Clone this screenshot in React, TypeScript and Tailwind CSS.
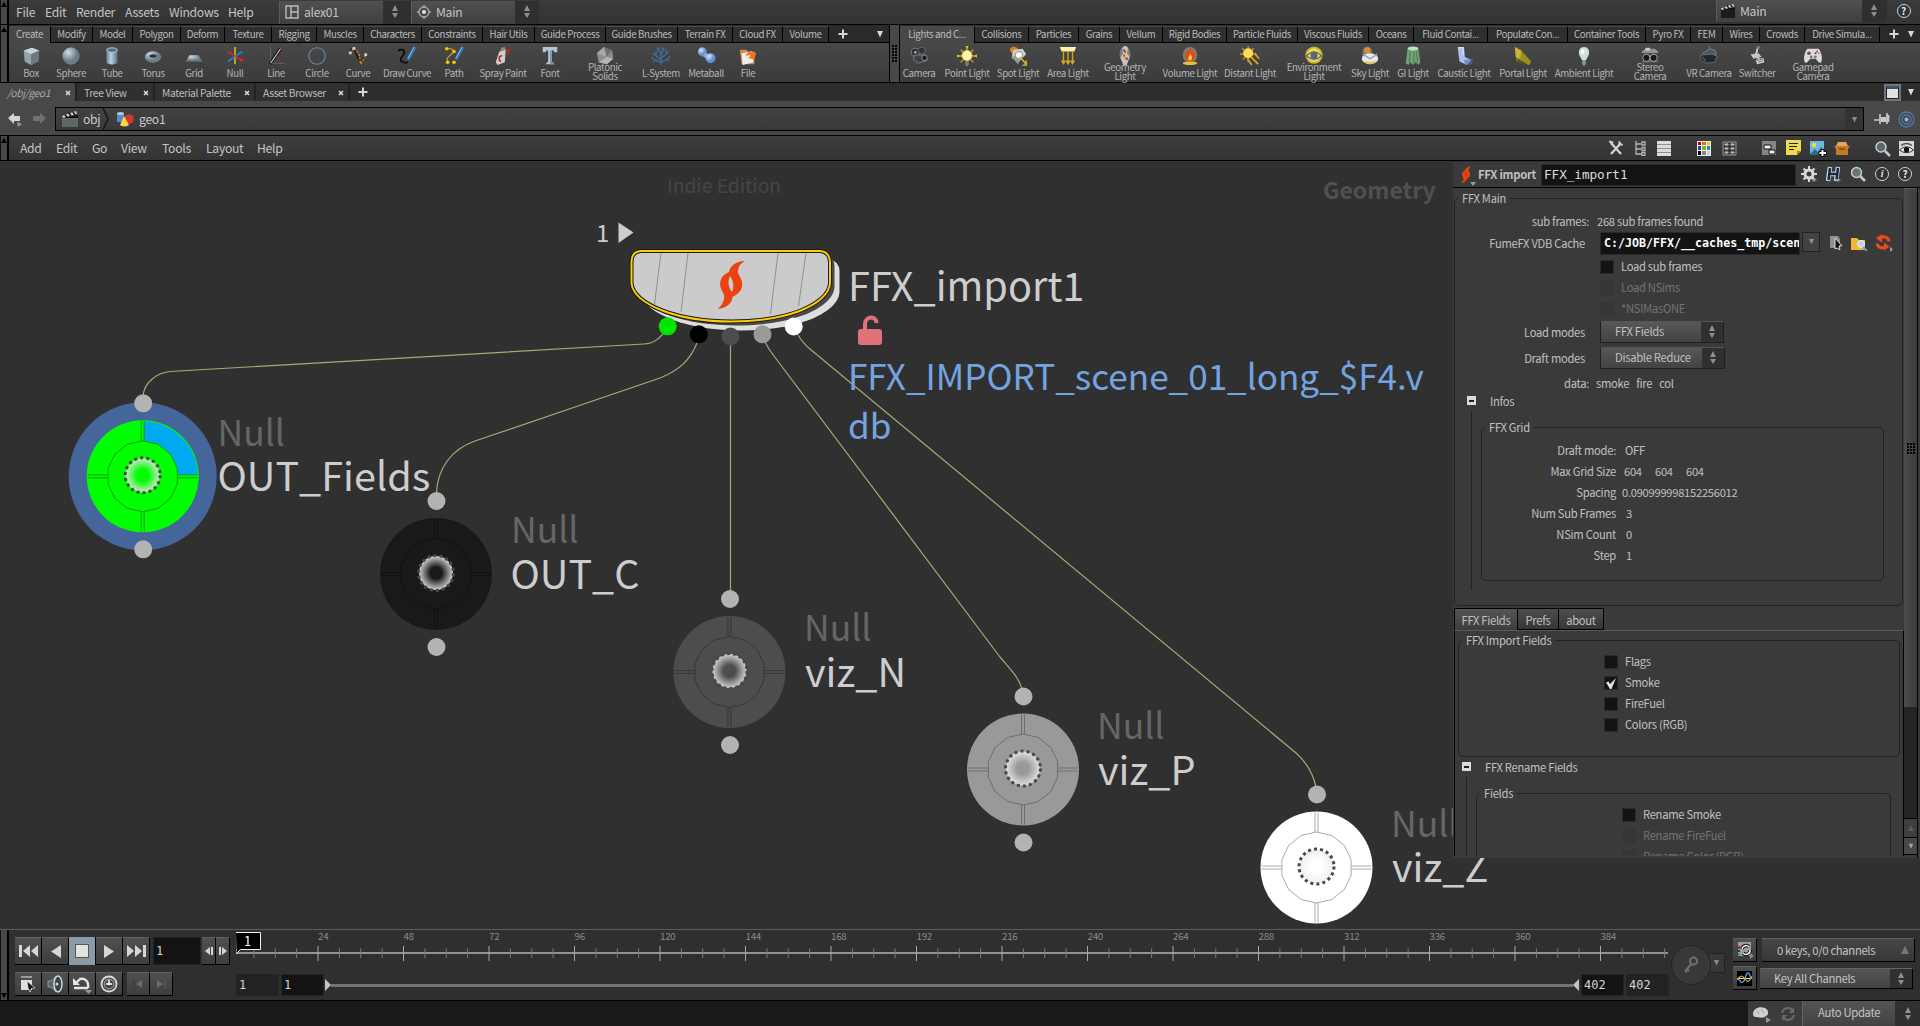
import React from "react";

type P = { children?: React.ReactNode; className?: string };

const SANS = "font-['Noto_Sans_CJK_SC','Noto_Sans',sans-serif]";
const MONO = "font-['DejaVu_Sans_Mono',monospace]";

/* ---------- small shared pieces ---------- */

function Svg({ w = 22, h = 22, vb, children, className = "" }: P & { w?: number; h?: number; vb?: string }) {
  return (
    <svg width={w} height={h} viewBox={vb ?? `0 0 ${w} ${h}`} fill="none" className={`shrink-0 ${className}`}>
      {children}
    </svg>
  );
}

function UpDown({ className = "" }: { className?: string }) {
  return (
    <Svg w={8} h={16} className={className}>
      <path d="M4 1L7 7H1zM4 14L1 9H7z" fill="#8f8f8f" />
    </Svg>
  );
}

function Down({ c = "#d8d8d8", s = 8 }: { c?: string; s?: number }) {
  return (
    <Svg w={s} h={s} vb="0 0 8 8">
      <path d="M1 1H7L4 7.500z" fill={c} />
    </Svg>
  );
}

function Plus() {
  return (
    <Svg w={10} h={10}>
      <path d="M5 0.500V9.500M0.500 5H9.500" stroke="#d6d6d6" strokeWidth="2" />
    </Svg>
  );
}

function Handle({ down }: { down?: boolean }) {
  return (
    <div className={`w-[9px] shrink-0 border-l border-r-2 border-l-[#111] border-r-black bg-[#484848] flex justify-center ${down ? "items-end pb-px" : "items-start pt-px"}`}>
      <Svg w={6} h={7}>
        <path d={down ? "M0 1H6L3 6z" : "M0 6H6L3 1z"} fill="#000" />
      </Svg>
    </div>
  );
}

function HelpDot({ t = "?" }: { t?: string }) {
  return (
    <div className={`w-[14px] h-[14px] rounded-full border border-[#d5d5d5] bg-[#2c3236] text-[#e8e8e8] text-[10px] leading-[12px] font-bold text-center ${t === "i" ? "font-['Liberation_Serif',serif] italic" : ""}`}>
      {t}
    </div>
  );
}

/* ---------- shelf icons ---------- */

const ICONS: Record<string, React.ReactNode> = {
  Box: (
    <>
      <path d="M3 5L12 2L20 5L19 17L11 21L4 17z" fill="#93a2ad" />
      <path d="M3 5L12 2L20 5L11 9z" fill="#c6d2da" />
      <path d="M11 9L20 5L19 17L11 21z" fill="#687885" />
    </>
  ),
  Sphere: <circle cx="11" cy="11" r="9.5" fill="url(#gSph)" />,
  Tube: (
    <>
      <path d="M5 4V18C5 21 17 21 17 18V4z" fill="url(#gTube)" />
      <ellipse cx="11" cy="4.500" rx="6" ry="2.500" fill="#4d7186" stroke="#c2d3dc" />
    </>
  ),
  Torus: (
    <>
      <ellipse cx="11" cy="12" rx="9" ry="6.500" fill="url(#gSph)" />
      <ellipse cx="11" cy="11" rx="4" ry="1.800" fill="#2a3036" />
    </>
  ),
  Grid: <path d="M6 10H16L20 17H2z" fill="url(#gSph)" />,
  Null: (
    <>
      <path d="M11 1V20" stroke="#b3a819" strokeWidth="2.200" />
      <path d="M3 6L19 16" stroke="#d22" strokeWidth="1.800" />
      <path d="M19 6L3 17" stroke="#3779c4" strokeWidth="1.800" />
      <path d="M17 14h3v3h-3z" fill="#e22" />
    </>
  ),
  Line: (
    <>
      <path d="M5 1V19H21" stroke="#666" />
      <path d="M4 20L16 3" stroke="#111" strokeWidth="3.500" />
      <path d="M5 19L16 3" stroke="#ddd" strokeWidth="1.200" />
      <path d="M2 20L6 14M12 8L16 19" stroke="#c22" strokeDasharray="2 1.500" />
    </>
  ),
  Circle: <circle cx="11" cy="11" r="9" stroke="#6e87ad" strokeWidth="1.200" />,
  Curve: (
    <>
      <path d="M2 7C6 -3 8 6 10 11S14 20 20 9" stroke="#111" strokeWidth="1.500" />
      <path d="M2 8L6 2L12 8L14 20L20 9" stroke="#c98a24" strokeDasharray="2.500 1.500" strokeWidth="1.500" />
      <path d="M1 6h3v3h-3zM5 1h3v3h-3zM18 8h3v3h-3z" fill="#cfcfcf" />
    </>
  ),
  "Draw Curve": (
    <>
      <path d="M1 5C8 2 10 6 6 11S4 19 12 18" stroke="#0c0c0c" strokeWidth="2" />
      <path d="M20 1L12 15" stroke="#2d6fb5" strokeWidth="3.500" />
      <path d="M19 1L12 14" stroke="#80b4e6" strokeWidth="1.200" />
    </>
  ),
  Path: (
    <>
      <path d="M3 3C14 2 10 8 6 11S4 17 5 18" stroke="#c99a1c" strokeWidth="1.400" />
      <path d="M21 1L13 15" stroke="#2d6fb5" strokeWidth="3.500" />
      <path d="M20 1L13 14" stroke="#80b4e6" strokeWidth="1.200" />
      <circle cx="3" cy="3" r="2" fill="#f2c500" />
      <circle cx="11" cy="6" r="2" fill="#f2c500" />
      <circle cx="4" cy="18" r="2" fill="#f2c500" />
      <circle cx="11" cy="18" r="2" fill="#f2c500" />
    </>
  ),
  "Spray Paint": (
    <>
      <path d="M14 3L21 4L16 11z" fill="#c4281c" opacity=".75" />
      <path d="M7 6L14 4L13 18L5 21L3 18z" fill="#cfcfcf" />
      <path d="M9 2L13 1L14 4L8 6z" fill="#8b8b8b" />
      <path d="M10 11C6 10 6 17 9 17" stroke="#c8302a" strokeWidth="2" />
    </>
  ),
  Font: (
    <>
      <path d="M3 1H19V7H16L15 5H13V17L16 20H6L9 17V5H7L6 7H3z" fill="#b4c5d3" />
      <path d="M11 5H13V17L16 20H11z" fill="#8496a5" />
    </>
  ),
  "Platonic Solids": (
    <>
      <path d="M10 1L19 5L20 14L13 20L4 18L2 8z" fill="#8d8d8d" />
      <path d="M10 1L13 12L2 8z" fill="#aaa" />
      <path d="M10 1L19 5L13 12z" fill="#6f6f6f" />
      <path d="M13 12L20 14L13 20L4 18z" fill="#b5b5b5" />
    </>
  ),
  "L-System": (
    <path
      d="M11 21V10M11 16L4 9M11 14L18 7M11 10L8 2M11 10L14 2M11 18L3 15L1 12M11 18L19 14L21 11M6 11L2 8M5 10L6 5M16 9L20 6M17 8L16 3M9 5L6 2M13 5L12 1M4 15L3 18M18 15L20 17"
      stroke="#3c6ea5"
      strokeWidth="1.400"
    />
  ),
  Metaball: (
    <>
      <circle cx="7" cy="6.500" r="5" fill="url(#gBlue)" />
      <path d="M9 9L14 13" stroke="#86aede" strokeWidth="5" />
      <circle cx="16" cy="13.500" r="5.500" fill="url(#gBlue)" />
    </>
  ),
  File: (
    <>
      <path d="M2 4H9L11 6H18V20H4z" fill="#d98d4a" />
      <path d="M4 8L15 6L17 18L5 21z" fill="#eee" />
      <path d="M9 10C10 6 14 5 16 8L20 7L18 15L11 13L14 11C12 9 10 10 9 12z" fill="#f2741f" />
    </>
  ),
  Camera: (
    <>
      <circle cx="7" cy="7" r="4.500" fill="#2c3237" stroke="#7b868e" />
      <circle cx="14" cy="5" r="3.800" fill="#2c3237" stroke="#67727a" />
      <path d="M6 10H18L20 16L10 19L5 15z" fill="#3b4248" stroke="#78838b" />
      <circle cx="17" cy="13" r="3" fill="#1b1f22" stroke="#8b969e" />
      <circle cx="7" cy="7" r="1.500" fill="#9aa5ad" />
    </>
  ),
  "Point Light": (
    <>
      <path d="M11 0V22M1 11H21M4 4L18 18M18 4L4 18" stroke="#d0a91b" strokeWidth="1.500" />
      <path d="M9 14H13V21H9z" fill="#777" />
      <circle cx="11" cy="10.500" r="5.500" fill="#fff5a8" stroke="#e5cf55" />
      <path d="M9 0H13L11 3zM0 9V13L3 11zM22 9V13L19 11z" fill="#e3bd22" />
    </>
  ),
  "Spot Light": (
    <>
      <path d="M2 5C2 0 8 0 11 3L5 9z" fill="#d98022" />
      <path d="M6 4L16 3L20 9L11 18L4 13z" fill="#cfcfca" />
      <path d="M4 12L9 10L13 16L11 20z" fill="#9a9a96" />
      <circle cx="12" cy="10" r="4" fill="#fdfdf0" stroke="#8a8a86" />
      <path d="M13 12L20 20M20 16V21H16" stroke="#e6c321" strokeWidth="1.500" />
    </>
  ),
  "Area Light": (
    <>
      <path d="M2 1H20L18 6H4z" fill="#fff3a6" />
      <path d="M6 6V19M11 6V20M16 6V19" stroke="#d0a91b" strokeWidth="1.500" />
      <path d="M3 16H9L6 21zM8 16H14L11 21zM13 16H19L16 21z" fill="#d0a91b" />
    </>
  ),
  "Geometry Light": (
    <>
      <ellipse cx="11" cy="9" rx="6" ry="9" fill="#fff" opacity=".3" />
      <path d="M11 0C15 0 15 5 13 7L16 12L13 21H9L6 13L9 8C7 5 8 0 11 0z" fill="#c9c3b5" />
      <path d="M9 4L13 8L10 11L14 15" stroke="#9a2a9a" strokeWidth="2" />
      <path d="M13 6L11 13" stroke="#e6d321" strokeWidth="2" />
    </>
  ),
  "Volume Light": (
    <>
      <ellipse cx="11" cy="10" rx="8" ry="9" fill="#d9b7a0" opacity=".45" />
      <ellipse cx="11" cy="19" rx="8" ry="2" fill="#e2c13a" />
      <path d="M11 1C13 5 17 7 16 13C15 18 7 18 6 13C5 10 8 9 8 5C10 7 11 5 11 1z" fill="#e6461a" />
      <path d="M11 8C12 11 14 11 13 14C12 17 9 16 9 14C9 12 11 11 11 8z" fill="#ffcf3a" />
    </>
  ),
  "Distant Light": (
    <>
      <path d="M9 0V18M0 9H18M2.500 2.500L15 15M15 2.500L3 15" stroke="#c99a1c" strokeWidth="1.500" />
      <circle cx="9" cy="8" r="5.500" fill="#ffdc52" />
      <path d="M12 12L20 20M16 8L21 14M8 14L13 21" stroke="#d8ae1e" strokeWidth="1.800" />
    </>
  ),
  "Environment Light": (
    <>
      <circle cx="11" cy="10" r="9.500" fill="#c9b52b" />
      <circle cx="11" cy="10" r="7.500" fill="#eadb57" />
      <path d="M3 11Q11 2 19 11Q11 18 3 11z" fill="#e4e4df" stroke="#6a6a55" strokeWidth="1.500" />
      <circle cx="11" cy="10.500" r="4" fill="#59676f" />
    </>
  ),
  "Sky Light": (
    <>
      <circle cx="8" cy="6" r="5.500" fill="#6a747b" />
      <circle cx="8" cy="5" r="3.500" fill="#e08c22" />
      <ellipse cx="11" cy="14" rx="9" ry="6" fill="#e8e8e8" />
      <path d="M3 9L11 14L19 9" stroke="#96a0b8" strokeWidth="1.500" />
      <path d="M2 16Q11 24 20 16Q11 19 2 16z" fill="#d9c45a" />
    </>
  ),
  "GI Light": (
    <>
      <ellipse cx="11" cy="3" rx="6" ry="2.500" fill="#bfe0c2" />
      <path d="M5 3L3 19L6 21L8 18L11 21L14 18L17 21L19 18L17 3C14 6 8 6 5 3z" fill="#6fa277" />
      <path d="M8 6L7 18M12 6V19M15 6L16 18" stroke="#48734f" />
    </>
  ),
  "Caustic Light": (
    <>
      <path d="M4 1H11L12 12L19 15L14 21L6 17z" fill="#a9c0ec" />
      <path d="M11 15L21 14L20 20L12 21z" fill="#5c6ca8" opacity=".6" />
      <path d="M5 2H10V10" stroke="#e7efff" />
    </>
  ),
  "Portal Light": (
    <>
      <path d="M2 1L9 5L20 17L18 21L4 17z" fill="#9a8f1d" />
      <path d="M2 1L9 5L8 14L3 12z" fill="#c4b832" />
      <path d="M5 14L16 20L13 21L5 19z" fill="#4f4d2a" />
    </>
  ),
  "Ambient Light": (
    <>
      <path d="M11 1C17 1 18 8 15 12L13 16H9L7 12C4 8 5 1 11 1z" fill="#cfdfe0" />
      <path d="M9 16H13V20L11 22L9 20z" fill="#8c9698" />
      <ellipse cx="9.500" cy="6" rx="2" ry="3" fill="#f4fafa" />
    </>
  ),
  "Stereo Camera": (
    <>
      <path d="M2 6L6 3H16L20 6V18H2z" fill="#8f9290" />
      <path d="M6 2H11V5H6z" fill="#caccc9" />
      <path d="M2 8H20V17H2z" fill="#2f3234" />
      <circle cx="7" cy="13" r="4" fill="#151718" stroke="#b6b9b7" />
      <circle cx="15" cy="13" r="4" fill="#151718" stroke="#b6b9b7" />
    </>
  ),
  "VR Camera": (
    <>
      <path d="M4 8L12 3L18 5L19 9L8 12z" fill="#50565b" stroke="#7b858c" />
      <path d="M2 10L14 9L20 11L17 18L7 19L2 15z" fill="#23282c" stroke="#5f6d78" />
      <path d="M4 12L8 18" stroke="#5a81a8" />
      <path d="M12 3L11 0" stroke="#777" />
    </>
  ),
  Switcher: (
    <>
      <path d="M12 1L10 9L14 16" stroke="#d4d4d4" strokeWidth="2" />
      <path d="M4 9L13 8L16 12L7 14z" fill="#c5c5c5" />
      <path d="M10 15L18 13L19 18L11 20z" fill="#e8e8e8" />
      <path d="M11 16L18 14M12 18L18 16" stroke="#555" />
      <circle cx="12.500" cy="1.500" r="2" fill="#777" />
    </>
  ),
  "Gamepad Camera": (
    <>
      <path d="M5 3H17C20 5 22 14 20 18C18 20 16 16 14 14H8C6 16 4 20 2 18C0 14 2 5 5 3z" fill="#dadada" />
      <circle cx="6.500" cy="8" r="2" fill="#555" />
      <circle cx="9" cy="12" r="1.600" fill="#777" />
      <circle cx="13.500" cy="12" r="1.600" fill="#777" />
      <circle cx="15.500" cy="6" r="1.100" fill="#d33" />
      <circle cx="17.500" cy="8" r="1.100" fill="#e8861b" />
      <circle cx="13.800" cy="8" r="1.100" fill="#357" />
    </>
  ),
};

/* ---------- shelves ---------- */

type Tool = [string, number];
type Tab = [string, number];

const LEFT_TABS: Tab[] = [
  ["Create", 42], ["Modify", 42], ["Model", 40], ["Polygon", 48], ["Deform", 44], ["Texture", 47], ["Rigging", 45], ["Muscles", 47],
  ["Characters", 58], ["Constraints", 61], ["Hair Utils", 52], ["Guide Process", 71], ["Guide Brushes", 72], ["Terrain FX", 55],
  ["Cloud FX", 50], ["Volume", 46],
];
const RIGHT_TABS: Tab[] = [
  ["Lights and C...", 75], ["Collisions", 54], ["Particles", 50], ["Grains", 41], ["Vellum", 43], ["Rigid Bodies", 64],
  ["Particle Fluids", 71], ["Viscous Fluids", 71], ["Oceans", 45], ["Fluid Contai...", 74], ["Populate Con...", 80],
  ["Container Tools", 78], ["Pyro FX", 45], ["FEM", 32], ["Wires", 37], ["Crowds", 45], ["Drive Simula...", 75],
];
const LEFT_TOOLS: Tool[] = [
  ["Box", 31], ["Sphere", 71], ["Tube", 112], ["Torus", 153], ["Grid", 194], ["Null", 235], ["Line", 276], ["Circle", 317],
  ["Curve", 358], ["Draw Curve", 407], ["Path", 454], ["Spray Paint", 503], ["Font", 550], ["Platonic Solids", 605],
  ["L-System", 661], ["Metaball", 706], ["File", 748],
];
const RIGHT_TOOLS: Tool[] = [
  ["Camera", 919], ["Point Light", 967], ["Spot Light", 1018], ["Area Light", 1068], ["Geometry Light", 1125],
  ["Volume Light", 1190], ["Distant Light", 1250], ["Environment Light", 1314], ["Sky Light", 1370], ["GI Light", 1413],
  ["Caustic Light", 1464], ["Portal Light", 1523], ["Ambient Light", 1584], ["Stereo Camera", 1650], ["VR Camera", 1709],
  ["Switcher", 1757], ["Gamepad Camera", 1813],
];
const TWO_LINE = new Set(["Platonic Solids", "Geometry Light", "Environment Light", "Stereo Camera", "Gamepad Camera"]);
const ITEM = 40;

function Shelf({ tabs, tools, origin, className }: { tabs: Tab[]; tools: Tool[]; origin: number; className: string }) {
  return (
    <div className={`flex flex-col bg-[#414141] tracking-[-0.38px] ${className}`}>
      <div className="flex h-[18px] bg-[#2a2a2a] pt-px">
        {tabs.map(([t, w], i) => (
          <div
            key={t}
            style={{ width: w }}
            className={`shrink-0 whitespace-nowrap border-r border-t border-t-[#4b4b4b] border-r-black text-center text-[9.700px] leading-[15px] text-[#bcbcbc] ${i === 0 ? "bg-[#484848]" : "border-b border-b-black bg-[#2f2f2f]"}`}
          >
            {t}
          </div>
        ))}
        <div className="flex grow items-center border-b border-black pl-[9px] justify-between pr-[5px]">
          <Plus />
          <Down />
        </div>
      </div>
      <div className="flex h-[39px] bg-linear-to-b from-[#484848] to-[#3b3b3b]">
        {tools.map(([t, c], i) => (
          <div
            key={t}
            style={{ width: ITEM, marginLeft: c - ITEM / 2 - (i ? tools[i - 1][1] + ITEM / 2 : origin) }}
            className="flex shrink-0 flex-col items-center pt-[3px]"
          >
            <Svg w={20} h={20} vb="0 0 22 22">{ICONS[t]}</Svg>
            {TWO_LINE.has(t) ? (
              <div className="-mt-[3px] text-center text-[9.700px] leading-[9px] text-[#b4b4b4]">
                {t.split(" ").map((l) => (
                  <div key={l} className="whitespace-nowrap">{l}</div>
                ))}
              </div>
            ) : (
              <div className="whitespace-nowrap text-[9.700px] leading-[14px] text-[#b4b4b4]">{t}</div>
            )}
          </div>
        ))}
      </div>
    </div>
  );
}

function Menu({ items }: { items: Tab[] }) {
  return (
    <>
      {items.map(([t, w]) => (
        <div key={t} style={{ width: w }} className="shrink-0 whitespace-nowrap text-[12.200px] tracking-[-0.3px] text-[#c4c4c4]">
          {t}
        </div>
      ))}
    </>
  );
}

function Clapper({ s = 18, c = "#888" }: { s?: number; c?: string }) {
  return (
    <Svg w={s} h={s} vb="0 0 18 18">
      <path d="M1 8H17V17H1z" fill={c} />
      <path d="M1 7L17 5V8H1z" fill="#111" />
      <path d="M1 6L15 1L16 4L2 8z" fill="#cfcfcf" />
      <path d="M4 5L6 7M8 3L10 6M12 2L14 5" stroke="#111" strokeWidth="1.500" />
    </Svg>
  );
}

function TopBar() {
  return (
    <div className="flex h-[24px] shrink-0 bg-linear-to-b from-[#3b3b3b] to-[#333] tracking-[-0.3px]">
      <Handle />
      <div className="flex grow items-center pl-[7px]">
        <Menu items={[["File", 29], ["Edit", 31], ["Render", 49], ["Assets", 44], ["Windows", 59], ["Help", 51]]} />
        <div className="flex h-[23px] w-[104px] items-center gap-[5px] border-l border-[#5a5a5a] bg-linear-to-b from-[#505050] to-[#404040] pl-[5px] text-[12.200px] text-[#c4c4c4]">
          <Svg w={14} h={14}>
            <path d="M1 1H13V13H1zM6 1V13M6 7H13" stroke="#bbb" strokeWidth="1.400" />
          </Svg>
          alex01
        </div>
        <div className="flex h-[23px] w-[28px] items-center bg-[#2f2f2f] pl-[8px]"><UpDown /></div>
        <div className="flex h-[23px] w-[104px] items-center gap-[5px] border-l border-[#5a5a5a] bg-linear-to-b from-[#505050] to-[#404040] pl-[5px] text-[12.200px] text-[#c4c4c4]">
          <Svg w={14} h={14}>
            <circle cx="7" cy="7" r="5" stroke="#9fa8a4" strokeWidth="1.300" />
            <circle cx="7" cy="7" r="2" fill="#dfe5e2" />
            <path d="M7 0V3M7 11V14M0 7H3M11 7H14" stroke="#9fa8a4" strokeWidth="1.500" />
          </Svg>
          Main
        </div>
        <div className="flex h-[23px] w-[24px] items-center bg-[#2f2f2f] pl-[8px]"><UpDown /></div>
        <div className="grow" />
        <div className="mb-[2px] flex h-[22px] w-[146px] items-center gap-[4px] border-l border-[#5a5a5a] bg-linear-to-b from-[#505050] to-[#404040] pl-[3px] text-[12.200px] text-[#c4c4c4]">
          <Clapper s={16} c="#1c1c1c" />
          Main
        </div>
        <div className="mb-[2px] flex h-[22px] w-[25px] items-center bg-[#2f2f2f] pl-[8px]"><UpDown /></div>
        <div className="mb-[2px] flex w-[33px] justify-center"><HelpDot /></div>
      </div>
    </div>
  );
}

function PaneTabs() {
  const tabs: Tab[] = [["/obj/geo1", 77], ["Tree View", 78], ["Material Palette", 101], ["Asset Browser", 94]];
  return (
    <div className="flex h-[18px] shrink-0 items-stretch bg-[#2d2d2d]">
      {tabs.map(([t, w], i) => (
        <div
          key={t}
          style={{ width: w }}
          className={`flex shrink-0 items-center justify-between whitespace-nowrap border-r-2 border-[#222] pl-[7px] pr-[4px] pt-[2px] text-[10.300px] tracking-[-0.36px] ${i === 0 ? "bg-[#484848] italic text-[#aaa]" : "bg-[#303030] text-[#bdbdbd]"}`}
        >
          {t}
          <Svg w={6} h={6}><path d="M1 1L5 5M5 1L1 5" stroke="#ddd" strokeWidth="1.500" /></Svg>
        </div>
      ))}
      <div className="flex grow items-center pl-[8px]"><Plus /></div>
      <div className="flex w-[36px] items-center justify-between pr-[5px]">
        <div className="h-[17px] w-[17px] bg-[#6b7884] p-[2px]">
          <div className="h-[13px] w-[13px] border border-t-[3px] border-[#222] border-t-[#44525e] bg-[#e2e2de]" />
        </div>
        <Down />
      </div>
    </div>
  );
}

function PathBar() {
  return (
    <div className="flex h-[34px] shrink-0 items-start bg-[#484848] pt-[6px]">
      <div className="flex h-[24px] w-[55px] items-center gap-[9px] pl-[7px]">
        <Svg w={16} h={16}>
          <path d="M1 7L7 2V5H13V10H7V13z" fill="#d4d4d0" />
          <path d="M10 11L15 13L11 16z" fill="#999" />
        </Svg>
        <Svg w={15} h={14}><path d="M14 6L8 1V4H1V9H8V12z" fill="#6f7270" /></Svg>
      </div>
      <div className="flex h-[24px] w-[1809px] items-center border border-t-[#000] border-black bg-linear-to-b from-[#414141] to-[#393939] pl-[5px] text-[12.200px] tracking-[-0.3px] text-[#cacaca]">
        <Clapper c="#5d6765" />
        <span className="w-[22px] pl-[4px]">obj</span>
        <Svg w={8} h={22} className="ml-[1px]"><path d="M1 0L6 11L1 22" stroke="#151515" strokeWidth="1.500" /></Svg>
        <Svg w={18} h={16} className="ml-[6px]">
          <path d="M1 2H8V11H1z" fill="#5b88c4" />
          <ellipse cx="4.500" cy="2.500" rx="3.500" ry="1.500" fill="#a9c8ee" />
          <circle cx="13" cy="8" r="4.800" fill="#d03a28" />
          <path d="M8 5L13 14Q8 17 4 14z" fill="#f4d84a" />
        </Svg>
        <span className="grow pl-[5px]">geo1</span>
        <div className="flex h-[22px] w-[18px] items-center justify-center bg-[#333]"><Down c="#8c8c8c" s={7} /></div>
      </div>
      <div className="flex h-[24px] grow items-center justify-between pl-[10px] pr-[5px]">
        <Svg w={16} h={14}>
          <path d="M0 8H6" stroke="#c9c9c9" strokeWidth="1.500" />
          <path d="M6 2V12M13 1V12M14.500 3V10" stroke="#c9c9c9" strokeWidth="1.600" />
          <path d="M7 5H12V10H7z" fill="#c9c9c9" />
        </Svg>
        <Svg w={17} h={17}>
          <circle cx="8.500" cy="8.500" r="7.500" stroke="#4d78ad" strokeWidth="1.300" />
          <circle cx="8.500" cy="8.500" r="4.500" stroke="#4d78ad" strokeWidth="1.300" />
          <circle cx="8.500" cy="8.500" r="2" fill="#8db4e4" />
        </Svg>
      </div>
    </div>
  );
}

function NetMenu() {
  return (
    <div className="flex h-[26px] shrink-0 border-y border-black bg-linear-to-b from-[#3e3e3e] to-[#333]">
      <Handle />
      <div className="flex grow items-center pl-[11px]">
        <Menu items={[["Add", 36], ["Edit", 36], ["Go", 29], ["View", 41], ["Tools", 44], ["Layout", 51], ["Help", 40]]} />
        <div className="grow" />
        <div className="flex w-[312px] items-center">
          <Svg w={16} h={16}>
            <path d="M3 14L13 3M3 3L13 14" stroke="#cfcfcf" strokeWidth="2.400" />
            <path d="M1 1L5 2L4 5zM11 1V5H15" fill="#cfcfcf" stroke="#cfcfcf" />
          </Svg>
          <Svg w={14} h={16} className="ml-[10px]">
            <path d="M2 1V14H8M2 4H7M2 9H7M8 2H11V5H8zM8 7.500H11V10.500H8zM8 12.500H11V15.500H8z" stroke="#b4b4b4" strokeWidth="1.300" />
          </Svg>
          <div className="ml-[9px] flex h-[15px] w-[14px] flex-col justify-between bg-[#8f928c]">
            {[0, 1, 2, 3].map((i) => <div key={i} className="h-[3px] bg-[#dcded8]" />)}
          </div>
          <div className="ml-[26px] grid h-[15px] w-[14px] grid-cols-3 gap-px bg-[#eee] p-px">
            <i className="bg-[#c00]" /><i className="bg-[#e62]" /><i className="bg-[#ec0]" />
            <i className="bg-[#248]" /><i className="bg-[#7b2]" /><i className="bg-[#38a]" />
            <i className="bg-[#000]" /><i className="bg-[#888]" /><i className="bg-[#ccc]" />
          </div>
          <Svg w={15} h={15} className="ml-[11px]">
            <path d="M1 1H14V14H1z" stroke="#999" />
            <path d="M3 3h3v1H3zM9 3h3v1H9zM3 7h3v1H3zM9 7h3v1H9zM3 11h3v1H3zM9 11h3v1H9z" stroke="#d0d0d0" />
          </Svg>
          <Svg w={15} h={15} className="ml-[25px]">
            <path d="M0 0H14V14H0z" fill="#858782" />
            <path d="M2 4H9V8H2zM7 9H13V13H7z" fill="#f0f0f0" stroke="#111" />
          </Svg>
          <Svg w={16} h={16} className="ml-[9px]">
            <path d="M0 0H15V11L11 15H0z" fill="#eedb52" />
            <path d="M3 3.500H12M3 6.500H11M3 9.500H8" stroke="#222" strokeWidth="1.200" />
            <path d="M11 15V11H15z" fill="#a08d20" />
          </Svg>
          <Svg w={17} h={17} className="ml-[8px]">
            <path d="M0 1H14V15H0z" fill="#70b4e4" />
            <circle cx="4" cy="5" r="2.200" fill="#f0e030" />
            <path d="M0 14L5 9L8 12L11 7L14 10V15H0z" fill="#2a6b86" />
            <path d="M12.500 9V17M8.500 13H17" stroke="#111" strokeWidth="4" />
            <path d="M12.500 10V16M9.500 13H16" stroke="#fff" strokeWidth="1.800" />
          </Svg>
          <Svg w={16} h={15} className="ml-[7px]">
            <path d="M2 5L4 1H12L14 5z" fill="#e8a75a" />
            <path d="M0 5H16L14 8V14H2V8z" fill="#c67a26" />
            <path d="M5 7H11V9H5z" fill="#8b5115" />
          </Svg>
          <Svg w={17} h={17} className="ml-[24px]">
            <circle cx="7" cy="7" r="5" fill="#5c686e" stroke="#c9cfd0" strokeWidth="1.500" />
            <path d="M11 11L16 16" stroke="#c9c9c9" strokeWidth="2.500" />
          </Svg>
          <Svg w={15} h={15} className="ml-[8px]">
            <path d="M0 0H15V15H0z" fill="#d9d9d4" />
            <path d="M2 4.500Q7.500 0.500 13 4.500" stroke="#555" strokeWidth="1.500" />
            <path d="M0.500 9Q7.500 2.500 14.500 9Q7.500 14.500 0.500 9z" fill="#f4f4f0" stroke="#333" />
            <circle cx="7.500" cy="8.700" r="2.700" fill="#111" />
          </Svg>
        </div>
      </div>
    </div>
  );
}

/* ---------- network canvas ---------- */

type NodeSpec = { x: number; y: number; fill: string; line: string; core: string; halo: string; id: string; flag?: boolean };

const NODES: NodeSpec[] = [
  { id: "f", x: 142.700, y: 476.300, fill: "#00ff00", line: "#0a9a0a", core: "#00ff00", halo: "#c8e8c8", flag: true },
  { id: "c", x: 436, y: 574, fill: "#191919", line: "#111111", core: "#191919", halo: "#cfcfcf" },
  { id: "n", x: 729.500, y: 672, fill: "#4d4d4d", line: "#363636", core: "#4d4d4d", halo: "#d0d0d0" },
  { id: "p", x: 1023, y: 769.500, fill: "#999999", line: "#6e6e6e", core: "#999999", halo: "#e0e0e0" },
  { id: "z", x: 1316.500, y: 867.500, fill: "#ffffff", line: "#a8a8a8", core: "#ffffff", halo: "#eeeeee" },
];

const RING = Array.from({ length: 14 }, (_, i) => {
  const a = (i / 14) * Math.PI * 2;
  return `${(Math.sin(a) * 35.500).toFixed(1)},${(-Math.cos(a) * 35.500).toFixed(1)}`;
}).join(" ");

function NullNode({ n }: { n: NodeSpec }) {
  return (
    <g transform={`translate(${n.x} ${n.y})`}>
      <radialGradient id={`core-${n.id}`}>
        <stop offset="0.35" stopColor={n.core} />
        <stop offset="1" stopColor={n.halo} />
      </radialGradient>
      {n.flag && <circle r="74" fill="#45669a" />}
      <circle r="56" fill={n.fill} />
      {n.flag && <path d="M1 -55A55 55 0 0 1 55 -1H35A35 35 0 0 0 1 -35z" fill="#00aaf0" />}
      <polygon points={RING} fill={n.fill} stroke={n.line} strokeWidth="1" />
      <path d="M-1.500 -55V-35M1.500 -55V-35M-1.500 55V35M1.500 55V35M-55 -1.500H-35M-55 1.500H-35M55 -1.500H35M55 1.500H35" stroke={n.line} />
      <circle cy="-1" r="17" fill={`url(#core-${n.id})`} />
      <circle cy="-1" r="17.500" stroke="#484848" strokeWidth="3" strokeDasharray="3 3.109" fill="none" />
      <circle cy="-73" cx="0.500" r="9" fill="#b3b3b3" />
      <circle cy="73" cx="0.500" r="9" fill="#b3b3b3" />
    </g>
  );
}

const BODY = "M641 251H821Q830 252 830.500 262V283C830 294 818 304 800 311C762 325 702 325 664 311C646 304 633 295 632 283V262Q632 252 641 251Z";
const FLAME = "M744.500 261C736 261 730 266 729 272C722 275 719 280 720.500 287C721.500 292 725.500 294 724 299C723 304 720 307 717.500 309C726 308 732 304 732.500 297C740 293 743 289 742 282C741 276 736 274 738.500 268C739.500 264.500 742 263 744.500 261ZM730 276C734 281 734 288 732 292C728 287 727.500 281 730 276Z";

function Label({ x, base, size, className, children }: P & { x: number; base: number; size: number }) {
  return (
    <div className={`absolute whitespace-nowrap leading-none ${className}`} style={{ left: x, top: base - 161 - size * 0.936, fontSize: size }}>
      {children}
    </div>
  );
}

function Network() {
  return (
    <div className="absolute inset-0 overflow-hidden">
      <svg width="1920" height="768" viewBox="0 161 1920 768" fill="none" className="absolute left-0 top-0">
        <g stroke="#96b473" strokeWidth="1.200">
          <path d="M663 334C657 341 652 343.500 644 344L170 371.500C156 373 144 383 143 396" />
          <path d="M697 343C690 360 680 370 660 378L475 441C452 449 437 468 436.500 494" />
          <path d="M730.500 337V591" />
          <path d="M765 342C768 348 770 351 774 356L1000 657C1011 670 1019 678 1022 689" />
          <path d="M798 335C801 340 805 345 810 349L1296 753C1306 762 1313 773 1316 787" />
        </g>
        <path transform="translate(9 9)" d={BODY} fill="#dedede" />
        <path transform="translate(4 4)" d={BODY} fill="#4a4a4a" />
        <g transform="translate(-0.500 0)">
          <path d={BODY} fill="#cbcbcb" stroke="#1a1a1a" strokeWidth="4" />
          <path d="M661.500 253L655 304M688.500 253L681.500 312M778.500 253L771 314M806.500 253L799 306" stroke="#8f8f8f" />
          <path d={BODY} stroke="#ffcc00" strokeWidth="2" />
        </g>
        <path d={FLAME} fill="#eb4310" fillRule="evenodd" />
        <circle cx="667.700" cy="326.300" r="9" fill="#00e600" />
        <circle cx="698.800" cy="334.300" r="9" fill="#000" />
        <circle cx="730.500" cy="336.500" r="9" fill="#4d4d4d" />
        <circle cx="762.500" cy="334.300" r="9" fill="#999" />
        <circle cx="793.700" cy="326.500" r="9" fill="#fff" />
        <path d="M618.500 222.500L633.500 232.500L618.500 243z" fill="#cdcdcd" />
        <rect x="858" y="329" width="24" height="16" rx="3" fill="#e0727c" />
        <path d="M865 330V324C865 316 876.500 315 876.500 323" stroke="#e0727c" strokeWidth="4" />
        {NODES.map((n) => <NullNode key={n.id} n={n} />)}
      </svg>
      <Label x={667} base={194} size={19.300} className="text-[#464646]">Indie Edition</Label>
      <Label x={1323} base={199.500} size={23} className="font-bold text-[#505050]">Geometry</Label>
      <Label x={596} base={242} size={24} className="text-[#cdcdcd]">1</Label>
      <Label x={848} base={301.500} size={39.700} className="text-[#cdcdcd]">FFX_import1</Label>
      <Label x={848} base={390} size={35.100} className="text-[#74a4e0]">FFX_IMPORT_scene_01_long_$F4.v</Label>
      <Label x={848} base={439} size={35.100} className="text-[#74a4e0]">db</Label>
      <Label x={217.500} base={446} size={35.500} className="text-[#666]">Null</Label>
      <Label x={217.500} base={491.500} size={39.600} className="text-[#cdcdcd]">OUT_Fields</Label>
      <Label x={511} base={543} size={35.500} className="text-[#666]">Null</Label>
      <Label x={510.500} base={589.500} size={39.600} className="text-[#cdcdcd]">OUT_C</Label>
      <Label x={804} base={641.500} size={35.500} className="text-[#666]">Null</Label>
      <Label x={805} base={687.200} size={39.600} className="text-[#cdcdcd]">viz_N</Label>
      <Label x={1097} base={739} size={35.500} className="text-[#666]">Null</Label>
      <Label x={1098} base={785.200} size={39.600} className="text-[#cdcdcd]">viz_P</Label>
      <Label x={1391} base={837} size={35.500} className="text-[#666]">Null</Label>
      <Label x={1392} base={882.500} size={39.600} className="text-[#cdcdcd]">viz_Z</Label>
    </div>
  );
}

/* ---------- parameter panel ---------- */

function Group({ title, className = "", children }: P & { title: string }) {
  return (
    <div className={`rounded-[5px] border border-[#222] ${className}`}>
      <div className="-mt-[9px] ml-[3px] h-[16px] w-fit bg-[#3a3a3a] px-[4px] leading-[16px]">{title}</div>
      {children}
    </div>
  );
}

function Check({ label, on, dim, className }: { label: string; on?: boolean; dim?: boolean; className: string }) {
  return (
    <div className={`flex h-[21px] items-center gap-[7px] ${className} ${dim ? "text-[#737373]" : ""}`}>
      <div className={`h-[14px] w-[14px] shrink-0 border ${dim ? "border-[#353535] bg-[#363636]" : "border-[#2a2a2a] bg-[#131313]"}`}>
        {on && (
          <Svg w={12} h={12}><path d="M1 5.500L3.500 4.500L5 7L11 1L6.500 12H5z" fill="#e2e2e2" /></Svg>
        )}
      </div>
      <span className="-mt-[2px]">{label}</span>
    </div>
  );
}

function Row({ label, w, gap, children, className = "h-[21px]" }: P & { label: string; w: string; gap: string }) {
  return (
    <div className={`flex items-center ${gap} ${className}`}>
      <div className={`${w} shrink-0 text-right`}>{label}</div>
      {children}
    </div>
  );
}

function Combo({ text, w }: { text: string; w: string }) {
  return (
    <div className={`-mt-px flex h-[22px] items-center border border-[#1f1f1f] border-t-[#555] bg-linear-to-b from-[#585858] to-[#424242] pl-[14px] ${w}`}>
      <span className="-mt-px grow">{text}</span>
      <div className="flex h-[20px] w-[22px] items-center justify-center bg-[#303030]"><UpDown /></div>
    </div>
  );
}

function Fold({ title, className }: { title: string; className: string }) {
  return (
    <div className={`flex h-[17px] items-center gap-[14px] ${className}`}>
      <div className="flex h-[9px] w-[9px] items-center justify-center bg-[#dcdcd6]"><div className="h-[2px] w-[5px] bg-[#222]" /></div>
      <span>{title}</span>
    </div>
  );
}

function FlameIcon() {
  return (
    <Svg w={10} h={18} vb="716 260 30 51"><path d={FLAME} fill="#eb4310" fillRule="evenodd" stroke="#eb4310" strokeWidth="2" /></Svg>
  );
}

function Params() {
  return (
    <div className="absolute right-0 top-[1px] flex h-[696px] w-[467px] flex-col overflow-hidden bg-[#3a3a3a] text-[11.200px] leading-[16px] tracking-[-0.28px] text-[#c0c0c0]">
      <div className="flex h-[26px] shrink-0 items-center border-b border-black pl-[8px]">
        <FlameIcon />
        <Svg w={6} h={4} className="-ml-[1px] mt-[18px]"><path d="M0 0H6L3 4z" fill="#999" /></Svg>
        <span className="-mt-px ml-[2px] w-[63px] whitespace-nowrap text-[11.300px] font-bold">FFX import</span>
        <div className={`h-[22px] w-[255px] border border-[#2a2a2a] bg-[#131313] pl-[2px] text-[12.700px] leading-[19px] tracking-[-0.05px] text-[#ddd] ${MONO}`}>FFX_import1</div>
        <div className="flex grow items-center justify-between pl-[5px] pr-[8px] pb-[2px]">
          <Svg w={16} h={16}>
            <circle cx="8" cy="8" r="4" stroke="#d8d8d8" strokeWidth="3" />
            <path d="M8 0V4M8 12V16M0 8H4M12 8H16M2.500 2.500L5 5M11 11L13.500 13.500M13.500 2.500L11 5M5 11L2.500 13.500" stroke="#d8d8d8" strokeWidth="2" />
            <path d="M10 13H16L13 16z" fill="#999" />
          </Svg>
          <Svg w={15} h={16}>
            <path d="M4 1L2 15M12 1L10 15M3 8H11" stroke="#cfd6dc" strokeWidth="4.500" />
            <path d="M4 2L2.500 14M12 2L10.500 14M3 8H11" stroke="#12294a" strokeWidth="2.500" />
            <path d="M9 13H15L12 16z" fill="#999" />
          </Svg>
          <Svg w={16} h={16}>
            <circle cx="6.500" cy="6.500" r="5" fill="#66747b" stroke="#c9cfd0" strokeWidth="1.400" />
            <path d="M10 10L15 15" stroke="#c9c9c9" strokeWidth="2.500" />
          </Svg>
          <HelpDot t="i" />
          <HelpDot />
        </div>
      </div>
      <div className="flex min-h-0 grow">
        <div className="flex w-[451px] flex-col pl-[1px]">
          <Group title="FFX Main" className="mt-[10px] h-[408px] w-[449px] shrink-0">
            <Row label="sub frames:" w="w-[134px]" gap="gap-[8px]" className="mt-[4px] h-[21px]">268 sub frames found</Row>
            <Row label="FumeFX VDB Cache" w="w-[130px]" gap="gap-[15px]" className="h-[24px]">
              <div className={`h-[23px] w-[200px] shrink-0 overflow-hidden whitespace-nowrap border border-[#2a2a2a] bg-[#131313] pl-[3px] text-[11.650px] font-bold leading-[20px] tracking-normal text-white ${MONO}`}>
                C:/JOB/FFX/__caches_tmp/scene
              </div>
              <div className="-ml-[13px] mb-[3px] flex h-[20px] w-[18px] items-center justify-center border border-[#222] bg-[#424242]"><Down c="#8d8d8d" s={7} /></div>
              <Svg w={14} h={16} className="-ml-[6px]">
                <path d="M1 1H9L11 4V13H1z" fill="#8f928e" />
                <path d="M6 3L13 11L10 11L11 15L8 13L6 14z" fill="#111" stroke="#ddd" />
              </Svg>
              <Svg w={17} h={15} className="-ml-[7px]">
                <path d="M0 2H6L8 4H14V14H0z" fill="#f2b632" />
                <circle cx="10" cy="8" r="3.500" fill="#b9d6ec" stroke="#eee" />
                <path d="M12 11L16 15" stroke="#5ea0da" strokeWidth="2" />
              </Svg>
              <Svg w={17} h={18} className="-ml-[7px]">
                <path d="M13 7.500A5.200 5.200 0 0 0 4.500 4.200" stroke="#ea4a1c" strokeWidth="3.200" />
                <path d="M6 0V8.500L0 4.200z" fill="#ea4a1c" />
                <path d="M1 9.500A5.200 5.200 0 0 0 9.500 12.500" stroke="#ea4a1c" strokeWidth="3.200" />
                <path d="M8 8.500V16.500L13.500 12.500z" fill="#ea4a1c" />
                <path d="M14 12.500L17 15.500L14 18z" fill="#999" />
              </Svg>
            </Row>
            <Check label="Load sub frames" className="mt-px ml-[145px]" />
            <Check label="Load NSims" dim className="ml-[145px]" />
            <Check label="*NSIMasONE" dim className="ml-[145px]" />
            <Row label="Load modes" w="w-[130px]" gap="gap-[15px]" className="h-[26px]"><Combo text="FFX Fields" w="w-[124px]" /></Row>
            <Row label="Draft modes" w="w-[130px]" gap="gap-[15px]" className="h-[26px]"><Combo text="Disable Reduce" w="w-[125px]" /></Row>
            <Row label="data:" w="w-[134px]" gap="gap-[7px]" className="mt-px h-[21px]">
              <div className="flex gap-[7px]"><span>smoke</span><span>fire</span><span>col</span></div>
            </Row>
            <Fold title="Infos" className="ml-[12px] -mt-px" />
            <div className="ml-[16px] mt-[2px] flex h-[179px] border-l border-[#222] pt-[16px]">
              <Group title="FFX Grid" className="ml-[9px] h-[154px] w-[403px]">
                <Row label="Draft mode:" w="w-[134px]" gap="gap-[9px]" className="mt-[4px] h-[21px]">OFF</Row>
                <Row label="Max Grid Size" w="w-[134px]" gap="gap-[8px]">
                  <div className="flex"><span className="w-[31px]">604</span><span className="w-[31px]">604</span><span>604</span></div>
                </Row>
                <Row label="Spacing" w="w-[134px]" gap="gap-[6px]">0.090999998152256012</Row>
                <Row label="Num Sub Frames" w="w-[134px]" gap="gap-[10px]">3</Row>
                <Row label="NSim Count" w="w-[134px]" gap="gap-[10px]">0</Row>
                <Row label="Step" w="w-[134px]" gap="gap-[10px]">1</Row>
              </Group>
            </div>
          </Group>
          <div className="mt-[2px] flex h-[22px] shrink-0 text-center leading-[22px]">
            <div className="w-[64px] border border-b-0 border-black bg-linear-to-b from-[#555] to-[#3d3d3d]">FFX Fields</div>
            <div className="w-[41px] border-y border-r border-black bg-linear-to-b from-[#4d4d4d] to-[#363636]">Prefs</div>
            <div className="w-[45px] border-y border-r border-black bg-linear-to-b from-[#4d4d4d] to-[#363636]">about</div>
          </div>
          <div className="min-h-0 grow overflow-hidden border-x border-t border-black border-t-[#5a5a5a] pl-[3px]">
            <Group title="FFX Import Fields" className="mt-[9px] h-[117px] w-[442px]">
              <Check label="Flags" className="ml-[145px] mt-[3px]" />
              <Check label="Smoke" on className="ml-[145px]" />
              <Check label="FireFuel" className="ml-[145px]" />
              <Check label="Colors (RGB)" className="ml-[145px]" />
            </Group>
            <Fold title="FFX Rename Fields" className="ml-[4px] mt-[1px]" />
            <div className="ml-[8px] mt-[2px] border-l border-[#222] pt-[16px]">
              <Group title="Fields" className="ml-[9px] h-[150px] w-[415px]">
                <Check label="Rename Smoke" className="ml-[145px] mt-[3px]" />
                <Check label="Rename FireFuel" dim className="ml-[145px]" />
                <Check label="Rename Color (RGB)" dim className="ml-[145px]" />
              </Group>
            </div>
          </div>
          <div className="h-[2px] shrink-0" />
        </div>
        <div className="flex w-[14px] flex-col border-r border-black bg-[#252525]">
          <div className="flex h-[519px] shrink-0 items-center justify-center border-t border-[#5a5a5a] bg-linear-to-r from-[#4c4c4c] to-[#3c3c3c]">
            <div className="grid grid-cols-3 gap-[1px]">
              {Array.from({ length: 12 }, (_, i) => <i key={i} className="h-[2px] w-[2px] bg-black" />)}
            </div>
          </div>
          <div className="h-[112px] shrink-0 border-b border-black" />
          <div className="flex h-[18px] shrink-0 items-center justify-center bg-[#3f3f3f]"><Svg w={6} h={6}><path d="M3 0L6 6H0z" fill="#5c5c5c" /></Svg></div>
          <div className="flex h-[18px] shrink-0 items-center justify-center border-y border-black bg-[#484848]"><Down c="#a8a8a8" s={6} /></div>
          <div className="grow bg-[#3a3a3a]" />
        </div>
      </div>
    </div>
  );
}

/* ---------- playbar ---------- */

function Btn({ children, className = "" }: P) {
  return (
    <div className={`flex shrink-0 items-center justify-center border-b border-r border-black border-t border-t-[#5f5f5f] bg-linear-to-b from-[#505050] to-[#3d3d3d] ${className}`}>
      {children}
    </div>
  );
}

function Num({ v, className }: { v: string; className: string }) {
  return <div className={`flex shrink-0 items-center border border-[#242424] pl-[2px] text-[12px] text-[#d4d4d4] ${MONO} ${className}`}>{v}</div>;
}

const PX = 3.5625;
const frameX = (f: number) => 318 - 236 + (f - 24) * PX;

function Timeline() {
  const ticks = Array.from({ length: 67 }, (_, i) => (i + 1) * 6);
  return (
    <div className="relative h-[36px] w-[1433px]">
      <svg width="1433" height="36" viewBox="0 0 1433 36" fill="none" className="block">
        <path d="M0 22H1432" stroke="#b5b5b5" strokeWidth="1.500" />
        {ticks.map((f) => (
          <path
            key={f}
            d={f % 24 ? `M${frameX(f)} 17.500V27` : `M${frameX(f)} 15V30`}
            stroke={f % 24 ? "#7b7b7b" : "#a8a8a8"}
          />
        ))}
        <path d="M-0.500 1.500H24.500V18.500H4.500L0 23z" fill="#000" stroke="#f2f2f2" />
      </svg>
      {ticks.filter((f) => f % 24 === 0).map((f) => (
        <div key={f} style={{ left: frameX(f) }} className="absolute top-0 text-[9.800px] leading-[11px] tracking-[-0.3px] text-[#8a8a8a]">{f}</div>
      ))}
      <div className="absolute left-[8px] top-[2px] text-[13px] leading-[16px] text-white">1</div>
    </div>
  );
}

function PlayBar() {
  const g = "#d6d6d2";
  return (
    <div className="flex h-[72px] shrink-0 border-b border-t border-b-black border-t-[#5c5c5c] bg-[#2f2f2f]">
      <Handle down />
      <div className="flex w-[227px] shrink-0 flex-col pl-[6px] pt-[7px]">
        <div className="flex h-[28px]">
          <Btn className="w-[27px] pl-px"><Svg w={20} h={12}><path d="M0 0H3V12H0zM11 0V12L4 6zM19 0V12L12 6z" fill={g} /></Svg></Btn>
          <Btn className="w-[27px] pl-px"><Svg w={11} h={13}><path d="M11 0V13L1 6.500z" fill={g} /></Svg></Btn>
          <div className="flex w-[27px] items-center justify-center border-r border-black bg-[#8a9aa6]"><div className="h-[14px] w-[14px] border border-[#555] bg-[#e4e4de]" /></div>
          <Btn className="w-[27px] pl-px"><Svg w={11} h={13}><path d="M0 0V13L10 6.500z" fill={g} /></Svg></Btn>
          <Btn className="w-[27px]"><Svg w={20} h={12}><path d="M20 0H17V12H20zM9 0V12L16 6zM1 0V12L8 6z" fill={g} /></Svg></Btn>
          <Num v="1" className="ml-[3px] w-[48px] bg-[#131313]" />
          <Btn className="ml-px w-[14px]"><Svg w={8} h={8}><path d="M5 0V8L0 4zM6 0H8V8H6z" fill={g} /></Svg></Btn>
          <Btn className="w-[14px]"><Svg w={8} h={8}><path d="M3 0V8L8 4zM0 0H2V8H0z" fill={g} /></Svg></Btn>
        </div>
        <div className="mt-[7px] flex h-[24px]">
          <Btn className="w-[27px]"><Svg w={18} h={18}><path d="M2 1H13V3H2z" fill="#999" /><path d="M2 5H13V15H2z" fill="#e0e0da" /><path d="M8 6L16 13L12.500 13.500L11 17L9 13z" fill="#111" stroke="#ddd" strokeWidth=".8" /></Svg></Btn>
          <Btn className="w-[27px]"><Svg w={18} h={20}><path d="M2 7H5L10 2V18L5 13H2z" fill="#5b666b" stroke="#8d9898" /><ellipse cx="12" cy="10" rx="4" ry="8" fill="#39444a" stroke="#cfd6d6" strokeWidth="1.500" /><circle cx="11" cy="10" r="1.500" fill="#cfd6d6" /></Svg></Btn>
          <Btn className="w-[27px]"><Svg w={20} h={20}><path d="M2 14H16M16 14C17 7 13 4 8 5L4 9" stroke="#e4e4e0" strokeWidth="2.400" /><path d="M1 4V11H8z" fill="#e4e4e0" /><path d="M13 16H20L16.500 20z" fill="#999" /></Svg></Btn>
          <Btn className="w-[27px]"><Svg w={18} h={18}><circle cx="9" cy="9" r="7.500" stroke="#d9dcda" strokeWidth="1.800" /><circle cx="9" cy="9" r="4.800" stroke="#a7adab" /><path d="M9 5V10M6 9H12" stroke="#fff" strokeWidth="1.500" /></Svg></Btn>
          <Btn className="ml-[4px] w-[23px]"><Svg w={10} h={10}><path d="M0 0H2V10H0z" fill="#2f4a2c" /><path d="M9 1V9L3 5z" fill="#6a6a6a" /></Svg></Btn>
          <Btn className="w-[23px]"><Svg w={10} h={10}><path d="M8 0H10V10H8z" fill="#3d5f39" /><path d="M1 1V9L7 5z" fill="#6a6a6a" /></Svg></Btn>
        </div>
      </div>
      <div className="flex w-[1433px] shrink-0 flex-col pt-[1px]">
        <Timeline />
        <div className="mt-[7px] flex h-[22px] items-center">
          <Num v="1" className="h-[22px] w-[43px] bg-[#222]" />
          <Num v="1" className="ml-[2px] h-[22px] w-[43px] bg-[#131313]" />
          <Svg w={6} h={12} className="ml-[1px]"><path d="M0 0L6 6L0 12z" fill="#c4c4c4" /></Svg>
          <div className="h-[3px] grow bg-[#737373]" />
          <Svg w={6} h={12} className="mr-[2px]"><path d="M6 0L0 6L6 12z" fill="#c4c4c4" /></Svg>
          <Num v="402" className="h-[22px] w-[43px] bg-[#131313]" />
          <Num v="402" className="ml-[2px] h-[22px] w-[43px] bg-[#222]" />
        </div>
      </div>
      <div className="flex w-[64px] shrink-0 items-center pl-[2px]">
        <div className="z-10 flex h-[40px] w-[40px] shrink-0 items-center justify-center rounded-full border border-[#242424] bg-[#383838]">
          <Svg w={16} h={18}>
            <circle cx="10.500" cy="5" r="3.500" stroke="#6f6f6f" strokeWidth="2" />
            <path d="M8.500 8L2 15M4 13L6 15M2 15L4 16.500" stroke="#6f6f6f" strokeWidth="2" />
          </Svg>
        </div>
        <div className="-ml-[3px] mb-[5px] flex h-[20px] w-[17px] items-center justify-center border border-[#222] bg-[#383838]"><Down c="#8a8a8a" s={7} /></div>
      </div>
      <div className="flex w-[24px] shrink-0 flex-col gap-[4px] pt-[8px]">
        <Btn className="h-[24px] w-[24px]">
          <Svg w={18} h={18}>
            <path d="M2 1H15V15H2z" fill="#9d9f9b" /><path d="M2 5h2v3H2z" fill="#c22" /><path d="M2 9h2v2H2z" fill="#22c" /><path d="M2 12h2v3H2z" fill="#2b2" />
            <path d="M6 8A4 4 0 0 1 13 6M14 9A4 4 0 0 1 7 12" stroke="#111" strokeWidth="3.500" /><path d="M6 8A4 4 0 0 1 13 6M14 9A4 4 0 0 1 7 12" stroke="#eee" strokeWidth="1.500" />
            <path d="M14 12L18 15L14 18z" fill="#888" />
          </Svg>
        </Btn>
        <Btn className="h-[24px] w-[24px]">
          <Svg w={15} h={15}><path d="M0 0H15V15H0z" fill="#000" /><path d="M0 7.500H15" stroke="#ddd" /><path d="M0 8C4 8 3 13 6 11S8 2 11 2S12 8 15 7" stroke="#5b9ad8" strokeWidth="1.300" /><path d="M0 9C4 3 6 5 8 8S12 12 15 5" stroke="#d89a32" strokeWidth="1.300" /></Svg>
        </Btn>
      </div>
      <div className="flex grow flex-col pl-[3px] pt-[8px] text-[11.300px] tracking-[-0.34px] text-[#c4c4c4]">
        <div className="ml-[2px] flex h-[24px] w-[153px] items-center justify-between border-b border-r border-t border-black border-t-[#5f5f5f] bg-linear-to-b from-[#464646] to-[#383838] pl-[15px] pr-[5px]">
          <span>0 keys, 0/0 channels</span>
          <Svg w={8} h={8}><path d="M4 0L8 8H0z" fill="#777" /></Svg>
        </div>
        <div className="mt-[6px] flex h-[21px] w-[153px] items-center justify-between border-b border-r border-t border-black border-t-[#666] bg-linear-to-b from-[#555] to-[#424242] pl-[14px]">
          <span>Key All Channels</span>
          <div className="flex h-[19px] w-[22px] items-center justify-center bg-[#303030]"><UpDown /></div>
        </div>
      </div>
    </div>
  );
}

export default function App() {
  return (
    <div className={`flex h-[1026px] w-[1920px] flex-col overflow-hidden bg-[#303030] ${SANS}`}>
      <svg width="0" height="0" className="absolute">
        <defs>
          <radialGradient id="gSph" cx=".35" cy=".3"><stop offset="0" stopColor="#cfdae2" /><stop offset="1" stopColor="#6c7d8a" /></radialGradient>
          <radialGradient id="gBlue" cx=".35" cy=".3"><stop offset="0" stopColor="#d5e6fa" /><stop offset="1" stopColor="#5c8fcf" /></radialGradient>
          <linearGradient id="gTube"><stop offset="0" stopColor="#6d8494" /><stop offset=".4" stopColor="#bcd0da" /><stop offset="1" stopColor="#5a7282" /></linearGradient>
        </defs>
      </svg>
      <TopBar />
      <div className="flex h-[59px] shrink-0 border-y border-black">
        <Handle />
        <Shelf tabs={LEFT_TABS} tools={LEFT_TOOLS} origin={9} className="w-[880px]" />
        <div className="flex w-[11px] items-center justify-center border-x border-black bg-[#484848]">
          <div className="grid grid-cols-2 gap-[1px]">
            {Array.from({ length: 12 }, (_, i) => <i key={i} className="h-[2px] w-[2px] bg-black" />)}
          </div>
        </div>
        <Shelf tabs={RIGHT_TABS} tools={RIGHT_TOOLS} origin={900} className="w-[1020px]" />
      </div>
      <PaneTabs />
      <PathBar />
      <NetMenu />
      <div className="relative grow">
        <Network />
        <Params />
      </div>
      <PlayBar />
      <div className="flex h-[25px] shrink-0 justify-end bg-[#191919] text-[11.300px] tracking-[-0.34px] text-[#c4c4c4]">
        <div className="flex w-[54px] items-center gap-[9px] bg-[#3c3c3c] pl-[4px]">
          <Svg w={19} h={18}>
            <path d="M1 9C1 3 8 1 13 3C17 5 17 10 14 11C12 14 5 12 4 12C2 12 1 11 1 9z" fill="#cfcfcf" />
            <path d="M4 6L8 9M9 4L12 8" stroke="#aaa" /><path d="M14 12L19 15L14 18z" fill="#999" />
          </Svg>
          <Svg w={16} h={16}>
            <path d="M2 7A6 6 0 0 1 13 5M14 9A6 6 0 0 1 3 11" stroke="#6a6a6a" strokeWidth="2" /><path d="M14 1V7H9zM2 15V9H7z" fill="#6a6a6a" />
          </Svg>
        </div>
        <div className="flex w-[93px] items-center border-l border-[#666] bg-linear-to-b from-[#555] to-[#424242] pb-[3px] pl-[15px]">Auto Update</div>
        <div className="flex w-[25px] items-center justify-center bg-[#303030]"><UpDown /></div>
      </div>
    </div>
  );
}
